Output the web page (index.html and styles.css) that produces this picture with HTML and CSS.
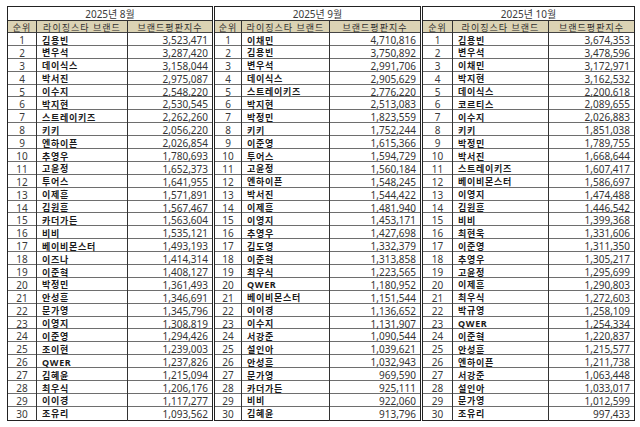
FILE: index.html
```html
<!DOCTYPE html>
<html lang="ko">
<head>
<meta charset="utf-8">
<title>라이징스타 브랜드평판</title>
<link rel="stylesheet" href="styles.css">
</head>
<body>
<div class="wrap">
  <div class="tbl t1">
    <div class="title">2025년 8월</div>
    <div class="head"><span>순위</span><span>라이징스타 브랜드</span><span>브랜드평판지수</span></div>
    <div class="row"><span>1</span><span>김용빈</span><span>3,523,471</span></div>
    <div class="row"><span>2</span><span>변우석</span><span>3,287,420</span></div>
    <div class="row"><span>3</span><span>데이식스</span><span>3,158,044</span></div>
    <div class="row"><span>4</span><span>박서진</span><span>2,975,087</span></div>
    <div class="row"><span>5</span><span>이수지</span><span>2,548,220</span></div>
    <div class="row"><span>6</span><span>박지현</span><span>2,530,545</span></div>
    <div class="row"><span>7</span><span>스트레이키즈</span><span>2,262,260</span></div>
    <div class="row"><span>8</span><span>키키</span><span>2,056,220</span></div>
    <div class="row"><span>9</span><span>엔하이픈</span><span>2,026,854</span></div>
    <div class="row"><span>10</span><span>추영우</span><span>1,780,693</span></div>
    <div class="row"><span>11</span><span>고윤정</span><span>1,652,373</span></div>
    <div class="row"><span>12</span><span>투어스</span><span>1,641,955</span></div>
    <div class="row"><span>13</span><span>이제훈</span><span>1,571,891</span></div>
    <div class="row"><span>14</span><span>김원훈</span><span>1,567,467</span></div>
    <div class="row"><span>15</span><span>카더가든</span><span>1,563,604</span></div>
    <div class="row"><span>16</span><span>비비</span><span>1,535,121</span></div>
    <div class="row"><span>17</span><span>베이비몬스터</span><span>1,493,193</span></div>
    <div class="row"><span>18</span><span>이즈나</span><span>1,414,314</span></div>
    <div class="row"><span>19</span><span>이준혁</span><span>1,408,127</span></div>
    <div class="row"><span>20</span><span>박정민</span><span>1,361,493</span></div>
    <div class="row"><span>21</span><span>안성훈</span><span>1,346,691</span></div>
    <div class="row"><span>22</span><span>문가영</span><span>1,345,796</span></div>
    <div class="row"><span>23</span><span>이영지</span><span>1,308,819</span></div>
    <div class="row"><span>24</span><span>이준영</span><span>1,294,426</span></div>
    <div class="row"><span>25</span><span>조이현</span><span>1,239,003</span></div>
    <div class="row"><span>26</span><span>QWER</span><span>1,237,826</span></div>
    <div class="row"><span>27</span><span>김혜윤</span><span>1,215,094</span></div>
    <div class="row"><span>28</span><span>최우식</span><span>1,206,176</span></div>
    <div class="row"><span>29</span><span>이이경</span><span>1,117,277</span></div>
    <div class="row"><span>30</span><span>조유리</span><span>1,093,562</span></div>
  </div>
  <div class="tbl t2">
    <div class="title">2025년 9월</div>
    <div class="head"><span>순위</span><span>라이징스타 브랜드</span><span>브랜드평판지수</span></div>
    <div class="row"><span>1</span><span>이채민</span><span>4,710,816</span></div>
    <div class="row"><span>2</span><span>김용빈</span><span>3,750,892</span></div>
    <div class="row"><span>3</span><span>변우석</span><span>2,991,706</span></div>
    <div class="row"><span>4</span><span>데이식스</span><span>2,905,629</span></div>
    <div class="row"><span>5</span><span>스트레이키즈</span><span>2,776,220</span></div>
    <div class="row"><span>6</span><span>박지현</span><span>2,513,083</span></div>
    <div class="row"><span>7</span><span>박정민</span><span>1,823,559</span></div>
    <div class="row"><span>8</span><span>키키</span><span>1,752,244</span></div>
    <div class="row"><span>9</span><span>이준영</span><span>1,615,366</span></div>
    <div class="row"><span>10</span><span>투어스</span><span>1,594,729</span></div>
    <div class="row"><span>11</span><span>고윤정</span><span>1,560,184</span></div>
    <div class="row"><span>12</span><span>엔하이픈</span><span>1,548,245</span></div>
    <div class="row"><span>13</span><span>박서진</span><span>1,544,422</span></div>
    <div class="row"><span>14</span><span>이제훈</span><span>1,481,940</span></div>
    <div class="row"><span>15</span><span>이영지</span><span>1,453,171</span></div>
    <div class="row"><span>16</span><span>추영우</span><span>1,427,698</span></div>
    <div class="row"><span>17</span><span>김도영</span><span>1,332,379</span></div>
    <div class="row"><span>18</span><span>이준혁</span><span>1,313,858</span></div>
    <div class="row"><span>19</span><span>최우식</span><span>1,223,565</span></div>
    <div class="row"><span>20</span><span>QWER</span><span>1,180,952</span></div>
    <div class="row"><span>21</span><span>베이비몬스터</span><span>1,151,544</span></div>
    <div class="row"><span>22</span><span>이이경</span><span>1,136,652</span></div>
    <div class="row"><span>23</span><span>이수지</span><span>1,131,907</span></div>
    <div class="row"><span>24</span><span>서강준</span><span>1,090,544</span></div>
    <div class="row"><span>25</span><span>설인아</span><span>1,039,621</span></div>
    <div class="row"><span>26</span><span>안성훈</span><span>1,032,943</span></div>
    <div class="row"><span>27</span><span>문가영</span><span>969,590</span></div>
    <div class="row"><span>28</span><span>카더가든</span><span>925,111</span></div>
    <div class="row"><span>29</span><span>비비</span><span>922,060</span></div>
    <div class="row"><span>30</span><span>김혜윤</span><span>913,796</span></div>
  </div>
  <div class="tbl t3">
    <div class="title">2025년 10월</div>
    <div class="head"><span>순위</span><span>라이징스타 브랜드</span><span>브랜드평판지수</span></div>
    <div class="row"><span>1</span><span>김용빈</span><span>3,674,353</span></div>
    <div class="row"><span>2</span><span>변우석</span><span>3,478,596</span></div>
    <div class="row"><span>3</span><span>이채민</span><span>3,172,971</span></div>
    <div class="row"><span>4</span><span>박지현</span><span>3,162,532</span></div>
    <div class="row"><span>5</span><span>데이식스</span><span>2,200,618</span></div>
    <div class="row"><span>6</span><span>코르티스</span><span>2,089,655</span></div>
    <div class="row"><span>7</span><span>이수지</span><span>2,026,883</span></div>
    <div class="row"><span>8</span><span>키키</span><span>1,851,038</span></div>
    <div class="row"><span>9</span><span>박정민</span><span>1,789,755</span></div>
    <div class="row"><span>10</span><span>박서진</span><span>1,668,644</span></div>
    <div class="row"><span>11</span><span>스트레이키즈</span><span>1,607,417</span></div>
    <div class="row"><span>12</span><span>베이비몬스터</span><span>1,586,697</span></div>
    <div class="row"><span>13</span><span>이영지</span><span>1,474,488</span></div>
    <div class="row"><span>14</span><span>김원훈</span><span>1,446,542</span></div>
    <div class="row"><span>15</span><span>비비</span><span>1,399,368</span></div>
    <div class="row"><span>16</span><span>최현욱</span><span>1,331,606</span></div>
    <div class="row"><span>17</span><span>이준영</span><span>1,311,350</span></div>
    <div class="row"><span>18</span><span>추영우</span><span>1,305,217</span></div>
    <div class="row"><span>19</span><span>고윤정</span><span>1,295,699</span></div>
    <div class="row"><span>20</span><span>이제훈</span><span>1,290,803</span></div>
    <div class="row"><span>21</span><span>최우식</span><span>1,272,603</span></div>
    <div class="row"><span>22</span><span>박규영</span><span>1,258,109</span></div>
    <div class="row"><span>23</span><span>QWER</span><span>1,254,334</span></div>
    <div class="row"><span>24</span><span>이준혁</span><span>1,220,837</span></div>
    <div class="row"><span>25</span><span>안성훈</span><span>1,215,577</span></div>
    <div class="row"><span>26</span><span>엔하이픈</span><span>1,211,738</span></div>
    <div class="row"><span>27</span><span>서강준</span><span>1,063,448</span></div>
    <div class="row"><span>28</span><span>설인아</span><span>1,033,017</span></div>
    <div class="row"><span>29</span><span>문가영</span><span>1,012,599</span></div>
    <div class="row"><span>30</span><span>조유리</span><span>997,433</span></div>
  </div>
</div>
</body>
</html>
```

FILE: styles.css
```css
html, body {
  margin: 0;
  padding: 0;
  background: #ffffff;
}

body {
  font-family: "Noto Sans", "Noto Sans CJK KR", sans-serif;
  color: #333333;
}

.wrap {
  display: flex;
  align-items: flex-start;
  gap: 1px;
  padding: 6px 0 0 7px;
}

.tbl {
  box-sizing: border-box;
  border: 1.5px solid #222222;
  background: #ffffff;
}

.t1 { width: 206px; }
.t2 { width: 207px; }
.t3 { width: 213px; }

.title {
  box-sizing: border-box;
  height: 14px;
  display: flex;
  align-items: center;
  justify-content: center;
  font-size: 10px;
  color: #3a3a3a;
  border-bottom: 1px solid #333333;
}

.head,
.row {
  display: grid;
  box-sizing: border-box;
}

.t1 .head, .t1 .row { grid-template-columns: 29px 91px 1fr; }
.t2 .head, .t2 .row { grid-template-columns: 27px 88px 1fr; }
.t3 .head, .t3 .row { grid-template-columns: 30px 96px 1fr; }

.head {
  height: 12px;
  background: #dbd3b4;
  border-bottom: 1px solid #444444;
}

.head span {
  display: flex;
  align-items: center;
  justify-content: center;
  font-family: "Noto Sans CJK KR", sans-serif;
  font-size: 9px;
  letter-spacing: 1px;
  color: #2f2f2f;
  border-right: 1px solid #333333;
  white-space: nowrap;
}

.row {
  height: 12.9px;
  border-bottom: 1px solid #6e6e6e;
}

.row:last-child {
  border-bottom: none;
}

.row span {
  display: flex;
  align-items: center;
  white-space: nowrap;
  border-right: 1px solid #333333;
}

.head span:last-child,
.row span:last-child {
  border-right: none;
}

.row span:nth-child(1) {
  justify-content: center;
  font-size: 10px;
  color: #3a3a3a;
}

.row span:nth-child(2) {
  padding-left: 5px;
  font-family: "Noto Sans", "Noto Sans CJK KR", sans-serif;
  font-weight: 700;
  font-size: 9px;
  letter-spacing: 0.7px;
  color: #1a1a1a;
}

.row span:nth-child(3) {
  justify-content: flex-end;
  padding-right: 4px;
  font-size: 10px;
  color: #333333;
}
```
